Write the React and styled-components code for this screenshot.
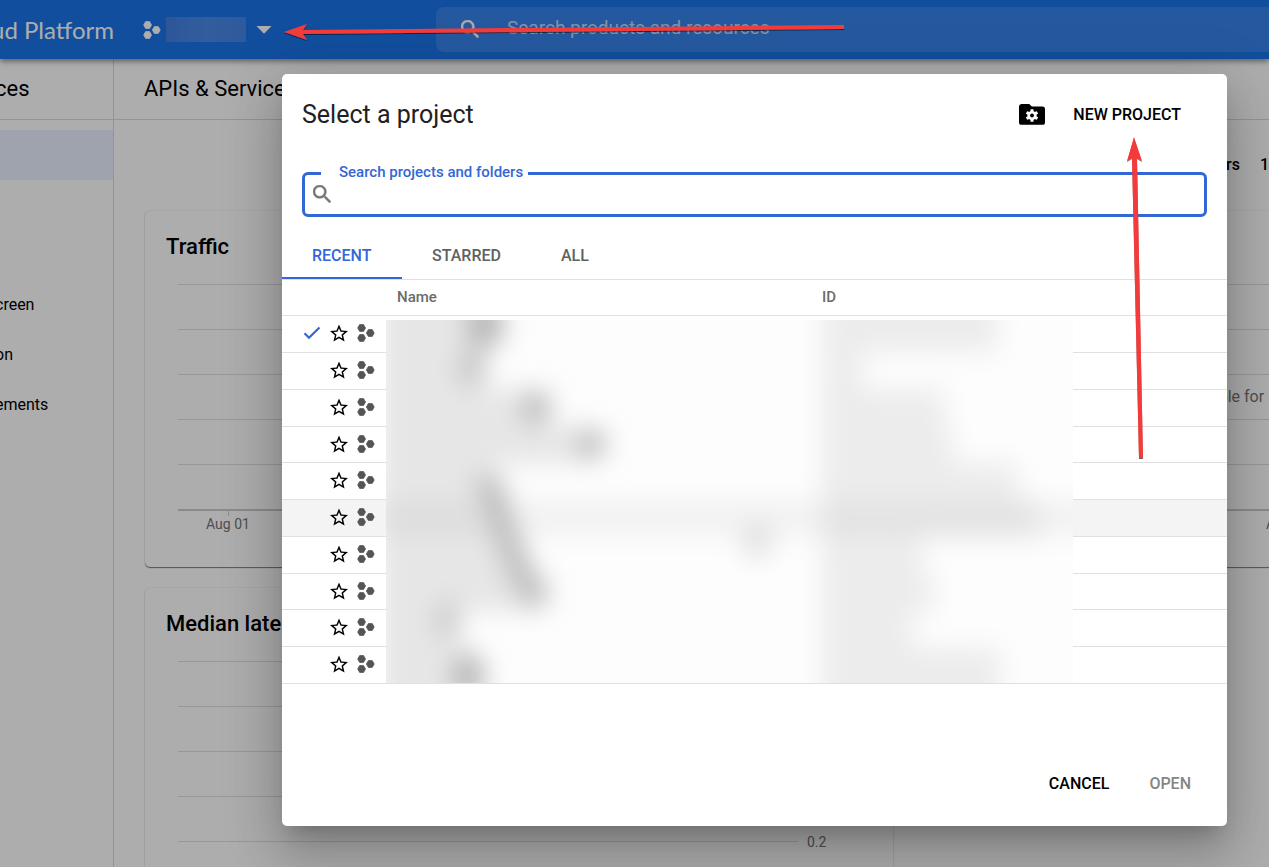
import React from "react";
import styled, { createGlobalStyle } from "styled-components";

const GlobalStyle = createGlobalStyle`
  *, *::before, *::after { box-sizing: border-box; }
  body { margin: 0; font-family: Roboto, "Liberation Sans", sans-serif; color: #000; background: #fff; }
  h1, h2, p { margin: 0; font-weight: 400; }
  button, input { font: inherit; }
`;

/* ---------- page behind the dialog ---------- */

const Page = styled.div`
  position: relative;
  display: flex;
  flex-direction: column;
  height: 100vh;
  overflow: hidden;
`;

const TopBar = styled.header`
  position: relative;
  z-index: 1;
  display: flex;
  align-items: center;
  flex: none;
  height: 59px;
  background: #1a73e8;
  color: #fff;
  box-shadow: 0 2px 6px rgba(0, 0, 0, 0.5);
`;

const Brand = styled.span`
  width: 114px;
  display: flex;
  justify-content: flex-end;
  font-family: Lato, Roboto, sans-serif;
  font-size: 24px;
  white-space: nowrap;
  overflow: hidden;
`;

const ProjectPicker = styled.button`
  display: flex;
  align-items: center;
  gap: 5px;
  width: 322px;
  padding: 0 0 0 29px;
  border: 0;
  background: none;
  color: #fff;
`;

const MaskedName = styled.span`
  width: 80px;
  height: 25px;
  margin-right: 5px;
  background: linear-gradient(90deg, #427fe0, #4a8ae9 50%, #4584e4);
`;

const SearchBar = styled.label`
  display: flex;
  align-items: center;
  gap: 28px;
  flex: 1;
  height: 45px;
  padding: 0 0 2px 25px;
  border-radius: 8px 0 0 8px;
  background: #3783ea;
`;

const SearchInput = styled.input`
  flex: 1;
  min-width: 0;
  padding: 0 0 2px;
  border: 0;
  outline: 0;
  background: none;
  color: #fff;
  font-size: 19px;
  &::placeholder { color: #c3d8f6; opacity: 1; }
`;

const Body = styled.div`
  display: flex;
  flex: 1;
  min-height: 0;
`;

const Sidebar = styled.nav`
  flex: none;
  width: 114px;
  border-right: 1px solid #dadada;
  overflow: hidden;
`;

const SidebarTitle = styled.h2`
  height: 61px;
  margin-bottom: 10px;
  border-bottom: 1px solid #dadada;
  font-size: 22px;
  line-height: 60px;
  text-indent: -5px;
`;

const SideLink = styled.a`
  display: block;
  height: 50px;
  font-size: 16px;
  line-height: 50px;
  text-indent: -5px;
  color: #000;
  text-decoration: none;
  background: ${(p) => (p.$active ? "#ebf1ff" : "none")};
`;

const Main = styled.main`
  flex: 1;
  min-width: 0;
  overflow: hidden;
`;

const MainTitle = styled.h1`
  height: 61px;
  padding-left: 30px;
  border-bottom: 1px solid #dadada;
  font-size: 22px;
  line-height: 60px;
`;

const RangeBar = styled.div`
  display: flex;
  justify-content: flex-end;
  align-items: center;
  gap: 20px;
  height: 91px;
  padding-bottom: 2px;
  font-size: 16px;
  font-weight: 500;
  white-space: nowrap;
`;

const Cards = styled.div`
  display: grid;
  grid-template-columns: repeat(2, minmax(748px, 1fr));
  gap: 21px;
  padding-left: 31px;
`;

const Card = styled.section`
  height: 356px;
  padding: 22px 0 0 21px;
  border-radius: 5px;
  box-shadow: 0 1px 1px rgba(0, 0, 0, 0.5), 0 0 2px rgba(0, 0, 0, 0.12);
`;

const CardTitle = styled.h2`
  height: 29px;
  font-size: 22px;
  font-weight: 500;
  line-height: 28px;
`;

const Chart = styled.div`
  position: relative;
  width: 100%;
  padding-left: 12px;
`;

const GridLine = styled.div`
  display: flex;
  align-items: center;
  gap: 9px;
  height: 45px;
  font-size: 14px;
  color: #757575;
  &::before {
    content: "";
    flex: none;
    width: 620px;
    height: ${(p) => (p.$axis ? 2 : 1)}px;
    background: ${(p) => (p.$axis ? "#ccc" : "#dfdfdf")};
  }
`;

const Ticks = styled.div`
  display: flex;
  margin-top: -21px;
  gap: 247px;
  padding-left: 28px;
  font-size: 14px;
  line-height: 16px;
  color: #757575;
  white-space: nowrap;
`;

const Tick = styled.span`
  display: flex;
  flex-direction: column;
  align-items: center;
  width: 44px;
  &::before { content: ""; width: 1px; height: 5px; background: #ccc; }
`;

const EmptyNote = styled.p`
  position: absolute;
  top: 125px;
  left: 166px;
  font-size: 16px;
  line-height: 20px;
  color: #757575;
  white-space: nowrap;
`;

/* ---------- dialog ---------- */

const Backdrop = styled.div`
  position: absolute;
  inset: 0;
  z-index: 2;
  display: flex;
  padding: 74px 42px 41px 282px;
  background: rgba(0, 0, 0, 0.32);
`;

const Dialog = styled.div`
  display: flex;
  flex-direction: column;
  flex: 1;
  min-width: 0;
  border-radius: 5px;
  background: #fff;
  box-shadow: 0 14px 19px -9px rgba(0, 0, 0, 0.2), 0 30px 48px 4px rgba(0, 0, 0, 0.14),
    0 11px 58px 10px rgba(0, 0, 0, 0.12);
`;

const DialogHead = styled.div`
  display: flex;
  align-items: center;
  height: 80px;
  padding: 0 46px 0 20px;
`;

const DialogTitle = styled.h2`
  flex: 1;
  font-size: 25px;
  color: #212121;
`;

const IconButton = styled.button`
  display: flex;
  padding: 0;
  border: 0;
  background: none;
`;

const TextButton = styled.button`
  padding: 0;
  border: 0;
  background: none;
  font-size: 16px;
  font-weight: 500;
  color: #000;
  &:disabled { color: #858585; }
`;

const NewProject = styled(TextButton)`
  margin-left: 28px;
`;

const SearchField = styled.fieldset`
  display: block;
  height: 55px;
  margin: 8px 20px 0;
  padding: 0 8px;
  border: 3px solid #3367d6;
  border-radius: 6px;
`;

const Legend = styled.legend`
  margin-left: 8px;
  padding: 0 5px 2px 18px;
  font-size: 15px;
  font-weight: 500;
  line-height: 20px;
  color: #3367d6;
`;

const FieldRow = styled.div`
  display: flex;
  align-items: center;
  gap: 10px;
  height: 20px;
`;

const FieldInput = styled.input`
  flex: 1;
  min-width: 0;
  border: 0;
  outline: 0;
  padding: 0;
  font-size: 16px;
  line-height: 20px;
`;

const Tabs = styled.div`
  display: flex;
  height: 46px;
  margin-top: 17px;
  border-bottom: 1px solid #e0e0e0;
`;

const Tab = styled.button`
  min-width: 120px;
  padding: 0 30px;
  border: 0;
  border-bottom: 2px solid ${(p) => (p.$active ? "#3367d6" : "transparent")};
  background: none;
  color: ${(p) => (p.$active ? "#3367d6" : "#616161")};
  font-size: 16px;
  font-weight: 500;
  line-height: 44px;
  text-align: left;
`;

const TableArea = styled.div`
  position: relative;
`;

const Table = styled.table`
  width: 100%;
  table-layout: fixed;
  border-spacing: 0;
`;

const HeadCell = styled.th`
  width: ${(p) => p.$width || "auto"};
  height: 36px;
  padding: 0 0 2px ${(p) => p.$pad || 0}px;
  border-bottom: 1px solid #e0e0e0;
  text-align: left;
  font-size: 15px;
  font-weight: 500;
  color: #6b6b6b;
`;

const Row = styled.tr`
  height: 37px;
  background: ${(p) => (p.$hover ? "#f4f4f4" : "none")};
  &:nth-child(4n) { height: 36px; }
`;

const Cell = styled.td`
  padding: 0;
  border-bottom: 1px solid #e0e0e0;
`;

const RowIcons = styled.div`
  display: flex;
  align-items: center;
  justify-content: flex-end;
  gap: 9px;
  padding: 0 11px 2px 0;
`;

const Blurred = styled.svg`
  position: absolute;
  left: 104px;
  top: 40px;
`;

const Actions = styled.div`
  display: flex;
  justify-content: flex-end;
  gap: 40px;
  margin-top: auto;
  padding: 0 36px 33px;
`;

const Annotations = styled.svg`
  position: absolute;
  inset: 0;
  z-index: 3;
  width: 100%;
  height: 100%;
  pointer-events: none;
`;

/* ---------- icons ---------- */

const hex = (cx, cy, r) =>
  [0, 60, 120, 180, 240, 300]
    .map((a) => {
      const t = (a * Math.PI) / 180;
      return `${(cx + r * Math.cos(t)).toFixed(2)},${(cy + r * Math.sin(t)).toFixed(2)}`;
    })
    .join(" ");

const ProjectIcon = ({ color }) => (
  <svg width="18" height="20" viewBox="0 0 18 20" fill={color} aria-hidden="true">
    {[[4.6, 5], [13.3, 10], [4.6, 15]].map(([x, y]) => (
      <polygon key={`${x}-${y}`} points={hex(x, y, 3.9)} stroke={color} strokeWidth="0.8" strokeLinejoin="round" />
    ))}
  </svg>
);

const MagnifierIcon = ({ color }) => (
  <svg width="18" height="18" viewBox="3 3 17.5 17.5" fill={color} stroke={color} strokeWidth="0.4" aria-hidden="true">
    <path d="M15.5 14h-.79l-.28-.27C15.41 12.59 16 11.11 16 9.5 16 5.91 13.09 3 9.5 3S3 5.91 3 9.5 5.910 16 9.5 16c1.610 0 3.090-.59 4.230-1.570l.27.28v.79l5 4.990L20.490 19l-4.990-5zm-6 0C7.010 14 5 11.990 5 9.500S7.010 5 9.500 5 14 7.010 14 9.500 11.990 14 9.500 14z" />
  </svg>
);

const StarIcon = () => (
  <svg width="18" height="18" viewBox="2 2 20 19" aria-hidden="true">
    <path d="M22 9.24l-7.19-.62L12 2 9.19 8.63 2 9.24l5.46 4.73L5.82 21 12 17.27 18.18 21l-1.63-7.03L22 9.24zM12 15.4l-3.76 2.27 1-4.28-3.32-2.88 4.38-.38L12 6.1l1.71 4.04 4.38.38-3.32 2.88 1 4.28L12 15.4z" />
  </svg>
);

const CheckIcon = () => (
  <svg width="18" height="14" viewBox="0 0 18 14" fill="none" stroke="#3367d6" strokeWidth="2.2" aria-label="Selected">
    <path d="M1.5 7.2L6 11.7 16.5 1.5" />
  </svg>
);

const FolderGearIcon = () => (
  <svg width="26" height="21" viewBox="0 0 26 21" aria-hidden="true">
    <path d="M2.5 0h7.7l2.7 2.6h10.4A2.6 2.6 0 0 1 26 5.2v13a2.6 2.6 0 0 1-2.6 2.6H2.6A2.6 2.6 0 0 1 0 18.2V2.6A2.6 2.6 0 0 1 2.5 0z" />
    <g fill="#fff" transform="translate(13 11.5)">
      <circle r="4.6" />
      {[0, 60, 120, 180, 240, 300].map((a) => (
        <rect key={a} x="-1.5" y="-6.3" width="3" height="3" rx=".4" transform={`rotate(${a})`} />
      ))}
      <circle r="1.9" fill="#000" />
    </g>
  </svg>
);

/* ---------- data ---------- */

const sideItems = [
  { label: "", active: true },
  { label: "" },
  { label: "" },
  { label: "creen" },
  { label: "on" },
  { label: "ements" },
];

const nameWidths = [105, 90, 145, 205, 105, 125, 135, 155, 70, 85];
const idWidths = [175, 40, 122, 130, 195, 218, 100, 112, 90, 178];
const smudges = [
  [99, 4, 19, 24, "#b4b4b4"],
  [86, 48, 14, 20, "#c4c4c4"],
  [150, 88, 15, 18, "#bababa"],
  [205, 124, 15, 15, "#bababa"],
  [62, 300, 12, 20, "#c8c8c8"],
  [82, 356, 16, 24, "#b4b4b4"],
  [148, 272, 15, 13, "#c4c4c4"],
  [371, 220, 14, 18, "#dedede"],
];

function ChartCard({ title, scale, note }) {
  return (
    <Card>
      <CardTitle>{title}</CardTitle>
      <Chart>
        {[0, 1, 2, 3, 4, 5].map((i) => (
          <GridLine key={i} $axis={i === 5}>{scale ? scale[i] : ""}</GridLine>
        ))}
        <Ticks>
          <Tick>Aug 01</Tick>
          <Tick>Aug 15</Tick>
        </Ticks>
        {note && <EmptyNote>{note}</EmptyNote>}
      </Chart>
    </Card>
  );
}

function BlurredValues() {
  return (
    <Blurred width="687" height="363" viewBox="0 0 687 363" aria-hidden="true">
      <defs>
        <filter id="soft" x="-20%" y="-20%" width="140%" height="140%">
          <feGaussianBlur stdDeviation="13" />
        </filter>
      </defs>
      <rect width="687" height="363" fill="#fdfdfd" />
      <g filter="url(#soft)">
        <rect x="-40" y="180" width="780" height="36" fill="#f2f2f2" />
        {nameWidths.map((w, i) => (
          <rect key={i} x="-6" y={i * 37 - 5 - (i ? 0 : 40)} width={w + 6} height={i % 9 ? 37 : 77} fill={i === 5 ? "#dedede" : "#e6e6e6"} />
        ))}
        {idWidths.map((w, i) => (
          <rect key={i} x="436" y={i * 37 - 5 - (i ? 0 : 40)} width={w} height={i % 9 ? 37 : 77} fill={i === 5 ? "#e3e3e3" : "#ececec"} />
        ))}
        {smudges.map(([x, y, rx, ry, fill]) => (
          <ellipse key={`${x}-${y}`} cx={x} cy={y} rx={rx} ry={ry} fill={fill} />
        ))}
        <path d="M103 164L120 212 134 252 148 276" fill="none" stroke="#bababa" strokeWidth="24" strokeLinecap="round" />
      </g>
    </Blurred>
  );
}

export default function App() {
  return (
    <>
      <GlobalStyle />
      <Page>
        <TopBar>
          <Brand>ud Platform</Brand>
          <ProjectPicker aria-label="Select a project">
            <ProjectIcon color="#fff" />
            <MaskedName />
            <svg width="16" height="8" viewBox="0 0 16 8" fill="#fff" aria-hidden="true">
              <path d="M0.5 0h15L8 7.8z" />
            </svg>
          </ProjectPicker>
          <SearchBar>
            <MagnifierIcon color="#fff" />
            <SearchInput aria-label="Search products and resources" placeholder="Search products and resources" />
          </SearchBar>
        </TopBar>
        <Body>
          <Sidebar>
            <SidebarTitle>ces</SidebarTitle>
            {sideItems.map((item, i) => (
              <SideLink key={i} href="#" $active={item.active}>{item.label}</SideLink>
            ))}
          </Sidebar>
          <Main>
            <MainTitle>APIs &amp; Services</MainTitle>
            <RangeBar>
              <span>hours</span>
              <span>1</span>
            </RangeBar>
            <Cards>
              <ChartCard title="Traffic" />
              <ChartCard title="Errors" note="No data is available for" />
              <ChartCard title="Median latency" scale={["1.0", "0.8", "0.6", "0.4", "0.2", "0"]} />
            </Cards>
          </Main>
        </Body>

        <Backdrop>
          <Dialog role="dialog" aria-labelledby="dialog-title">
            <DialogHead>
              <DialogTitle id="dialog-title">Select a project</DialogTitle>
              <IconButton aria-label="Manage resources"><FolderGearIcon /></IconButton>
              <NewProject>NEW PROJECT</NewProject>
            </DialogHead>
            <SearchField>
              <Legend><label htmlFor="project-search">Search projects and folders</label></Legend>
              <FieldRow>
                <MagnifierIcon color="#757575" />
                <FieldInput id="project-search" type="text" />
              </FieldRow>
            </SearchField>
            <Tabs role="tablist">
              <Tab role="tab" aria-selected="true" $active>RECENT</Tab>
              <Tab role="tab" aria-selected="false">STARRED</Tab>
              <Tab role="tab" aria-selected="false">ALL</Tab>
            </Tabs>
            <TableArea>
              <Table>
                <thead>
                  <tr>
                    <HeadCell $width="104px" />
                    <HeadCell $width="426px" $pad={11}>Name</HeadCell>
                    <HeadCell $pad={10}>ID</HeadCell>
                  </tr>
                </thead>
                <tbody>
                  {nameWidths.map((_, i) => (
                    <Row key={i} $hover={i === 5}>
                      <Cell>
                        <RowIcons>
                          {i === 0 && <CheckIcon />}
                          <StarIcon />
                          <ProjectIcon color="#555" />
                        </RowIcons>
                      </Cell>
                      <Cell />
                      <Cell />
                    </Row>
                  ))}
                </tbody>
              </Table>
              <BlurredValues />
            </TableArea>
            <Actions>
              <TextButton>CANCEL</TextButton>
              <TextButton disabled>OPEN</TextButton>
            </Actions>
          </Dialog>
        </Backdrop>

        <Annotations aria-hidden="true">
          <defs>
            <filter id="drop" filterUnits="userSpaceOnUse" x="0" y="0" width="1400" height="600">
              <feDropShadow dx="0" dy="1" stdDeviation="0.6" floodColor="#000" floodOpacity="0.6" />
            </filter>
          </defs>
          <g fill="#f43b3b" filter="url(#drop)">
            <path d="M284 32L307 24 303 30 844 25V29L303 34 307 40z" />
            <path d="M1134 137L1142 161 1137 158 1143 458H1139L1132 158 1127 161z" />
          </g>
        </Annotations>
      </Page>
    </>
  );
}
